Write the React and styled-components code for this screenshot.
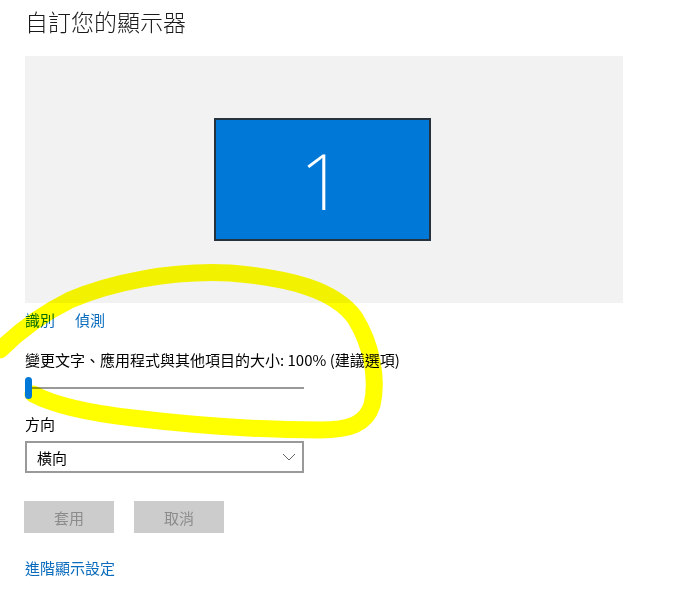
import React from 'react';
import styled, { createGlobalStyle } from 'styled-components';

const Global = createGlobalStyle`
  body {
    margin: 0;
    background: #ffffff;
    font-family: "Noto Sans CJK TC", "Noto Sans", sans-serif;
    color: #000000;
  }
`;

const Page = styled.div`
  position: relative;
  width: 682px;
  height: 607px;
  padding: 5px 0 0 25px;
  box-sizing: border-box;
  overflow: hidden;
`;

const Title = styled.h1`
  margin: 0;
  font-size: 23px;
  font-weight: 300;
  line-height: 32px;
  color: #1a1a1a;
`;

const Canvas = styled.div`
  margin-top: 19px;
  width: 598px;
  height: 247px;
  background: #f2f2f2;
  display: flex;
  align-items: center;
  justify-content: center;
`;

const Monitor = styled.div`
  width: 217px;
  height: 123px;
  box-sizing: border-box;
  margin-right: 4px;
  border: 2px solid #26323e;
  background: #0078d7;
  color: #ffffff;
  display: flex;
  align-items: center;
  justify-content: center;
  font-family: "Noto Sans", "DejaVu Sans", sans-serif;
  font-weight: 200;
  font-size: 78px;
  line-height: 1;
`;

const LinkRow = styled.div`
  margin-top: 7px;
  display: flex;
  gap: 20px;
`;

const Link = styled.a`
  font-size: 15px;
  line-height: 20px;
  color: #0a6cbd;
  text-decoration: none;
  cursor: pointer;
`;

const Label = styled.div`
  margin-top: ${p => p.$top}px;
  font-size: 15px;
  line-height: 20px;
  color: #000;
`;

const Slider = styled.div`
  position: relative;
  margin-top: 7px;
  width: 279px;
  height: 22px;
  display: flex;
  align-items: center;
`;

const Track = styled.div`
  flex: 1;
  height: 2px;
  background: #999999;
`;

const Thumb = styled.div`
  position: absolute;
  left: 0;
  top: 0;
  width: 7px;
  height: 22px;
  border-radius: 4px;
  background: #0078d7;
  z-index: 2;
`;

const Select = styled.div`
  margin-top: 7px;
  width: 279px;
  height: 32px;
  box-sizing: border-box;
  border: 2px solid #999999;
  display: flex;
  align-items: center;
  justify-content: space-between;
  padding: 0 6px 0 10px;
  font-size: 15px;
  color: #000;
`;

const ButtonRow = styled.div`
  margin-top: 28px;
  margin-left: -1px;
  display: flex;
  gap: 20px;
`;

const Button = styled.button`
  width: 90px;
  height: 32px;
  border: none;
  background: #cccccc;
  color: #8c8c8c;
  font-family: inherit;
  font-size: 15px;
  padding: 0;
`;

const Footer = styled(Link)`
  display: block;
  margin-top: 25px;
`;

const Marker = styled.svg`
  position: absolute;
  left: 0;
  top: 0;
  pointer-events: none;
  mix-blend-mode: multiply;
  z-index: 1;
`;

function Chevron() {
  return (
    <svg width="14" height="8" viewBox="0 0 14 8">
      <path d="M1 1 L7 7 L13 1" fill="none" stroke="#666" strokeWidth="1" />
    </svg>
  );
}

export default function App() {
  return (
    <Page>
      <Global />
      <Title>自訂您的顯示器</Title>
      <Canvas>
        <Monitor>1</Monitor>
      </Canvas>
      <LinkRow>
        <Link>識別</Link>
        <Link>偵測</Link>
      </LinkRow>
      <Label $top={20}>變更文字、應用程式與其他項目的大小: 100% (建議選項)</Label>
      <Slider>
        <Thumb />
        <Track />
      </Slider>
      <Label $top={15}>方向</Label>
      <Select>
        <span>橫向</span>
        <Chevron />
      </Select>
      <ButtonRow>
        <Button>套用</Button>
        <Button>取消</Button>
      </ButtonRow>
      <Footer>進階顯示設定</Footer>
      <Marker width="682" height="607" viewBox="0 0 682 607">
        <path
          d="M33 394 C50 403 80 412 133 418 C200 426 270 430 320 430 C350 430 366 424 372 405 C378 380 372 345 355 318 C335 290 290 278 230 273 C170 270 110 283 70 300 C40 315 15 335 0 350"
          fill="none"
          stroke="#ffff00"
          strokeWidth="17"
          strokeLinecap="round"
        />
      </Marker>
    </Page>
  );
}
